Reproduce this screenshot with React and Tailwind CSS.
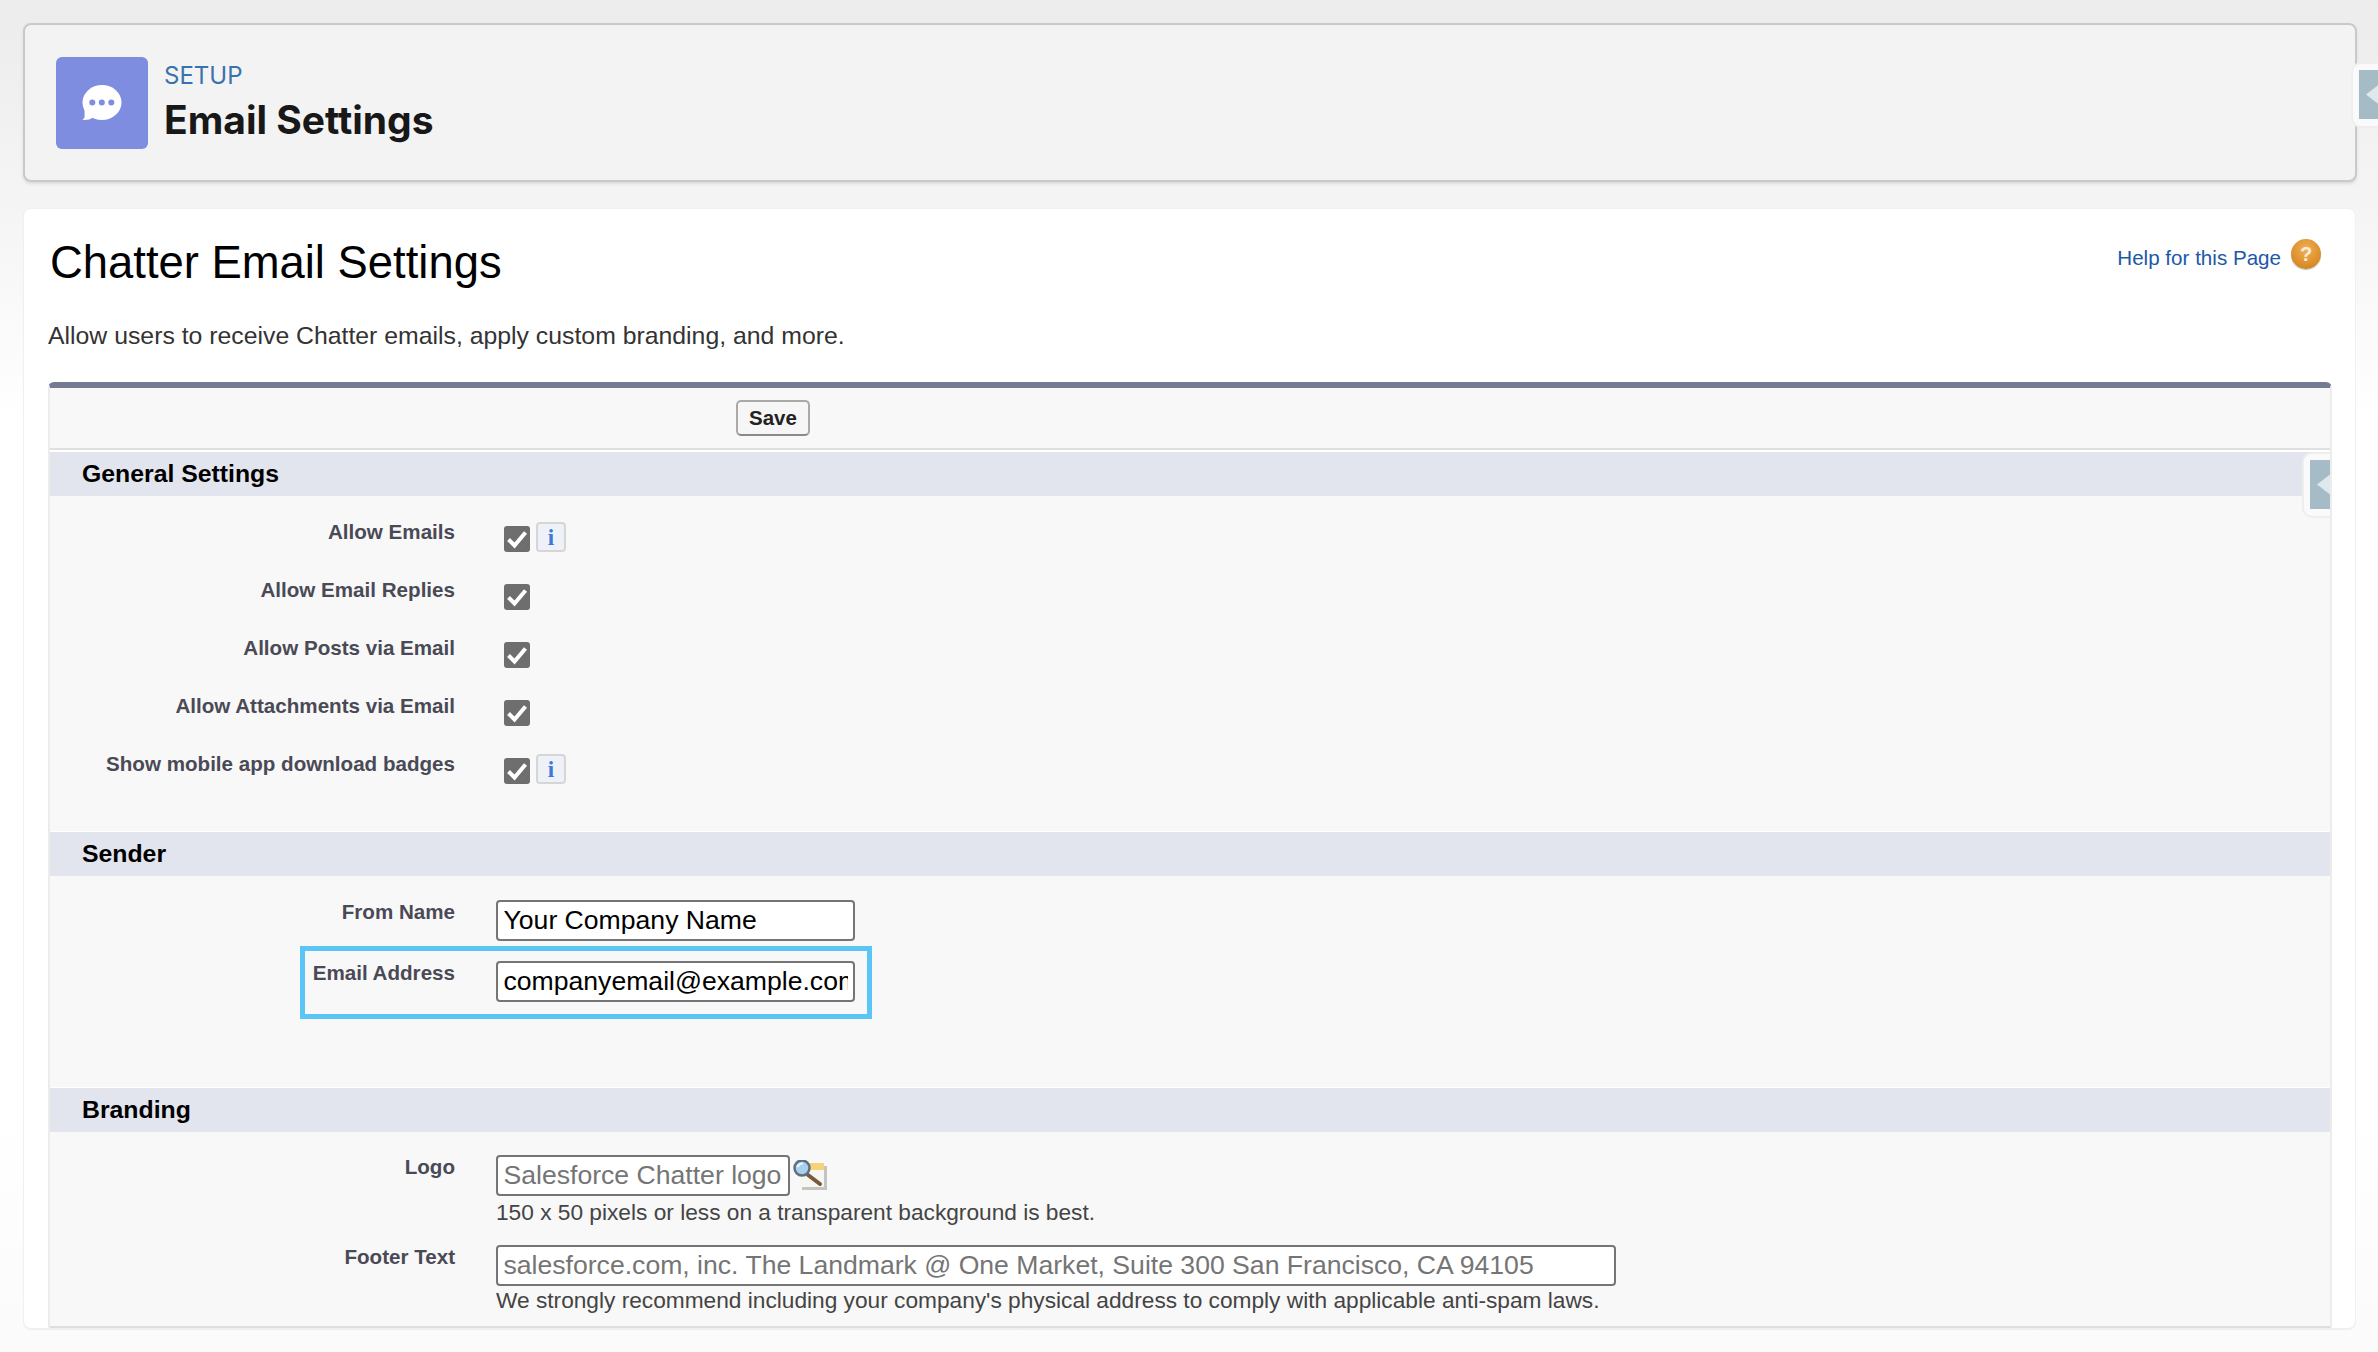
import React from 'react';

const ARIAL = "font-['Liberation_Sans',Arial,sans-serif]";

const ChatIcon = () => (
  <div className="w-[92px] h-[92px] rounded-[6px] bg-[#7f8de1] shrink-0">
    <svg width="92" height="92" viewBox="0 0 92 92">
      <ellipse cx="46" cy="45.5" rx="19.5" ry="17.5" fill="#fff" />
      <path d="M28.5 50 L28.6 60 Q27.8 62 26.4 63 Q33 63.6 37 60.5 Z" fill="#fff" />
      <circle cx="36.3" cy="45.5" r="3" fill="#7f8de1" />
      <circle cx="45.8" cy="45.5" r="3" fill="#7f8de1" />
      <circle cx="55.3" cy="45.5" r="3" fill="#7f8de1" />
    </svg>
  </div>
);

const HelpIcon = () => (
  <div className="w-[30px] h-[30px] rounded-full bg-[radial-gradient(circle_at_50%_35%,#f0b056,#d98a26_70%,#a8701f)] shadow-[0_1px_1px_#b9b9b9] flex items-center justify-center">
    <span className={`${ARIAL} text-[20px] leading-none font-bold text-[#fbeedb]`}>?</span>
  </div>
);

const CheckBox = () => (
  <div className="w-[26px] h-[26px] mt-[6px] rounded-[3px] bg-[#6e6e6e] shrink-0">
    <svg width="26" height="26" viewBox="0 0 26 26">
      <path d="M4.5 13.5 L10.5 19.5 L21.5 6.5" fill="none" stroke="#fff" strokeWidth="4" />
    </svg>
  </div>
);

const InfoButton = () => (
  <div className="w-[30px] h-[30px] ml-[6px] rounded-[4px] border-2 border-[#d6d6d6] bg-[#eef1f8] flex items-center justify-center">
    <span className="font-['Liberation_Serif',serif] text-[23px] leading-none font-bold text-[#3f78d8]">i</span>
  </div>
);

const LookupIcon = () => (
  <svg width="34" height="30" viewBox="0 0 34 30" className="ml-[3px] mt-[5px] shrink-0">
    <rect x="9" y="6" width="25" height="24" fill="#c4c4c4" />
    <rect x="7" y="3" width="24" height="24" fill="#f7f7f2" />
    <rect x="15" y="3" width="16" height="7" fill="#f6d27a" />
    <path d="M15 15 L27 24" stroke="#7a5a3c" strokeWidth="4" strokeLinecap="round" />
    <circle cx="9" cy="8" r="7.5" fill="#a9d0ec" stroke="#5f6f80" strokeWidth="2.5" />
    <path d="M4.5 7 Q6 3.5 10 3.5" stroke="#eaf5fc" strokeWidth="2" fill="none" />
  </svg>
);

const SideTab = ({ className }) => (
  <div className={`absolute rounded-l-[10px] border-2 border-r-0 border-[#eeeeee] bg-[#fafafa] overflow-hidden w-[30px] h-[66px] pt-[6px] pl-[6px] ${className}`}>
    <div className="w-[24px] h-[49px] bg-[#a5bbc5] overflow-hidden">
      <svg width="24" height="49" viewBox="0 0 24 49">
        <path d="M7 24.5 L22 13 L22 36 Z" fill="#dfe8ec" />
      </svg>
    </div>
  </div>
);

const SectionHeader = ({ title }) => (
  <div className={`${ARIAL} h-[44px] pl-[32px] flex items-center bg-[#e2e5ee] text-[24.8px] font-bold text-black`}>
    {title}
  </div>
);

const Label = ({ children }) => (
  <div className={`${ARIAL} w-[405px] shrink-0 text-right text-[20.6px] leading-[24px] font-bold text-[#4a4a56]`}>
    {children}
  </div>
);

const CheckRow = ({ label, info }) => (
  <div className="flex h-[58px]">
    <Label>{label}</Label>
    <div className="flex items-start ml-[49px]">
      <CheckBox />
      {info && <div className="mt-[2px]"><InfoButton /></div>}
    </div>
  </div>
);

const TextField = ({ value, width, muted }) => (
  <input
    type="text"
    readOnly
    value={value}
    className={`${ARIAL} h-[41px] px-[5.5px] bg-white border-2 border-[#757575] rounded-[4px] text-[26.6px] outline-none ${width} ${muted ? 'text-[#757575]' : 'text-black'}`}
  />
);

export default function App() {
  return (
    <div className="relative h-[1352px] overflow-hidden pt-[23px] px-[23px] bg-[linear-gradient(#ececec_0px,#f8f8f8_280px,#ffffff_420px,#ffffff_1100px,#fbfbfb_1352px)]">
      {/* page header */}
      <div className="h-[159px] w-[2334px] px-[31px] flex items-center rounded-[8px] border-2 border-[#c9c9c9] bg-[#f3f3f3] shadow-[0_2px_3px_#dcdcdc]">
        <ChatIcon />
        <div className="ml-[16px] font-['Inter',sans-serif]">
          <div className="text-[24px] leading-[30px] text-[#3a72ad] -mt-[1px]">SETUP</div>
          <div className="mt-[5px] text-[39px] leading-[48px] font-bold text-[#181818]">Email Settings</div>
        </div>
      </div>

      <SideTab className="top-[62px] left-[2351px]" />

      {/* main card */}
      <div className="relative mt-[26px] w-[2333px] h-[1121px] pt-[26px] pl-[24px] pr-[23px] rounded-[8px] border border-[#f0f0f0] bg-white shadow-[0_1px_1px_#eeeeee]">
        <div className="flex justify-between items-start">
          <h1 className={`${ARIAL} ml-[2px] text-[45.4px] leading-[56px] text-black`}>Chatter Email Settings</h1>
          <div className="flex items-start pr-[11px] pt-[4px]">
            <a className={`${ARIAL} mt-[7px] text-[20.6px] leading-[24px] text-[#2058a8]`}>Help for this Page</a>
            <div className="ml-[10px]"><HelpIcon /></div>
          </div>
        </div>
        <p className={`${ARIAL} mt-[30px] text-[24.8px] leading-[30px] text-[#333333]`}>
          Allow users to receive Chatter emails, apply custom branding, and more.
        </p>

        {/* form panel */}
        <div className="relative mt-[31px] h-[946px] overflow-hidden rounded-t-[6px] border-t-[6px] border-x-2 border-[#747b93] border-x-[#ececec] bg-[#f8f8f8]">
          <div className="h-[60px] pt-[12px] pl-[686px]">
            <button className={`${ARIAL} w-[74px] h-[36px] rounded-[5px] border-2 border-[#a9a9a9] border-b-[#8a8a8a] bg-[#f6f6f6] text-[20.5px] font-bold text-[#222222]`}>
              Save
            </button>
          </div>
          <div className="h-[4px] border-t-2 border-[#e0e0e0] bg-white" />

          <SectionHeader title="General Settings" />
          <div className="h-[336px] pt-[24px] border-b border-white">
            <CheckRow label="Allow Emails" info />
            <CheckRow label="Allow Email Replies" />
            <CheckRow label="Allow Posts via Email" />
            <CheckRow label="Allow Attachments via Email" />
            <CheckRow label="Show mobile app download badges" info />
          </div>

          <SectionHeader title="Sender" />
          <div className="h-[212px] pt-[24px] border-b border-white">
            <div className="flex">
              <Label>From Name</Label>
              <div className="ml-[41px]"><TextField value="Your Company Name" width="w-[359px]" /></div>
            </div>
            <div className="flex w-[572px] h-[73px] ml-[250px] mt-[5px] border-[5px] border-[#5bc5f8]">
              <div className={`${ARIAL} w-[150px] shrink-0 mt-[10px] text-right text-[20.6px] leading-[24px] font-bold text-[#4a4a56]`}>
                Email Address
              </div>
              <div className="ml-[41px] mt-[10px]"><TextField value="companyemail@example.com" width="w-[359px]" /></div>
            </div>
          </div>

          <SectionHeader title="Branding" />
          <div className="pt-[23px]">
            <div className="flex h-[90px]">
              <Label>Logo</Label>
              <div className="ml-[41px]">
                <div className="flex">
                  <TextField value="Salesforce Chatter logo" width="w-[294px]" muted />
                  <LookupIcon />
                </div>
                <div className={`${ARIAL} mt-[1px] text-[22.7px] leading-[30px] text-[#444444]`}>
                  150 x 50 pixels or less on a transparent background is best.
                </div>
              </div>
            </div>
            <div className="flex">
              <Label>Footer Text</Label>
              <div className="ml-[41px]">
                <TextField value="salesforce.com, inc. The Landmark @ One Market, Suite 300 San Francisco, CA 94105" width="w-[1120px]" muted />
                <div className={`${ARIAL} -mt-[1px] text-[22.7px] leading-[30px] text-[#444444]`}>
                  We strongly recommend including your company's physical address to comply with applicable anti-spam laws.
                </div>
              </div>
            </div>
          </div>
          <div className="absolute bottom-0 inset-x-0 h-[2px] bg-[#dedede]" />
          <SideTab className="top-[64px] right-[-2px]" />
        </div>
      </div>
    </div>
  );
}
